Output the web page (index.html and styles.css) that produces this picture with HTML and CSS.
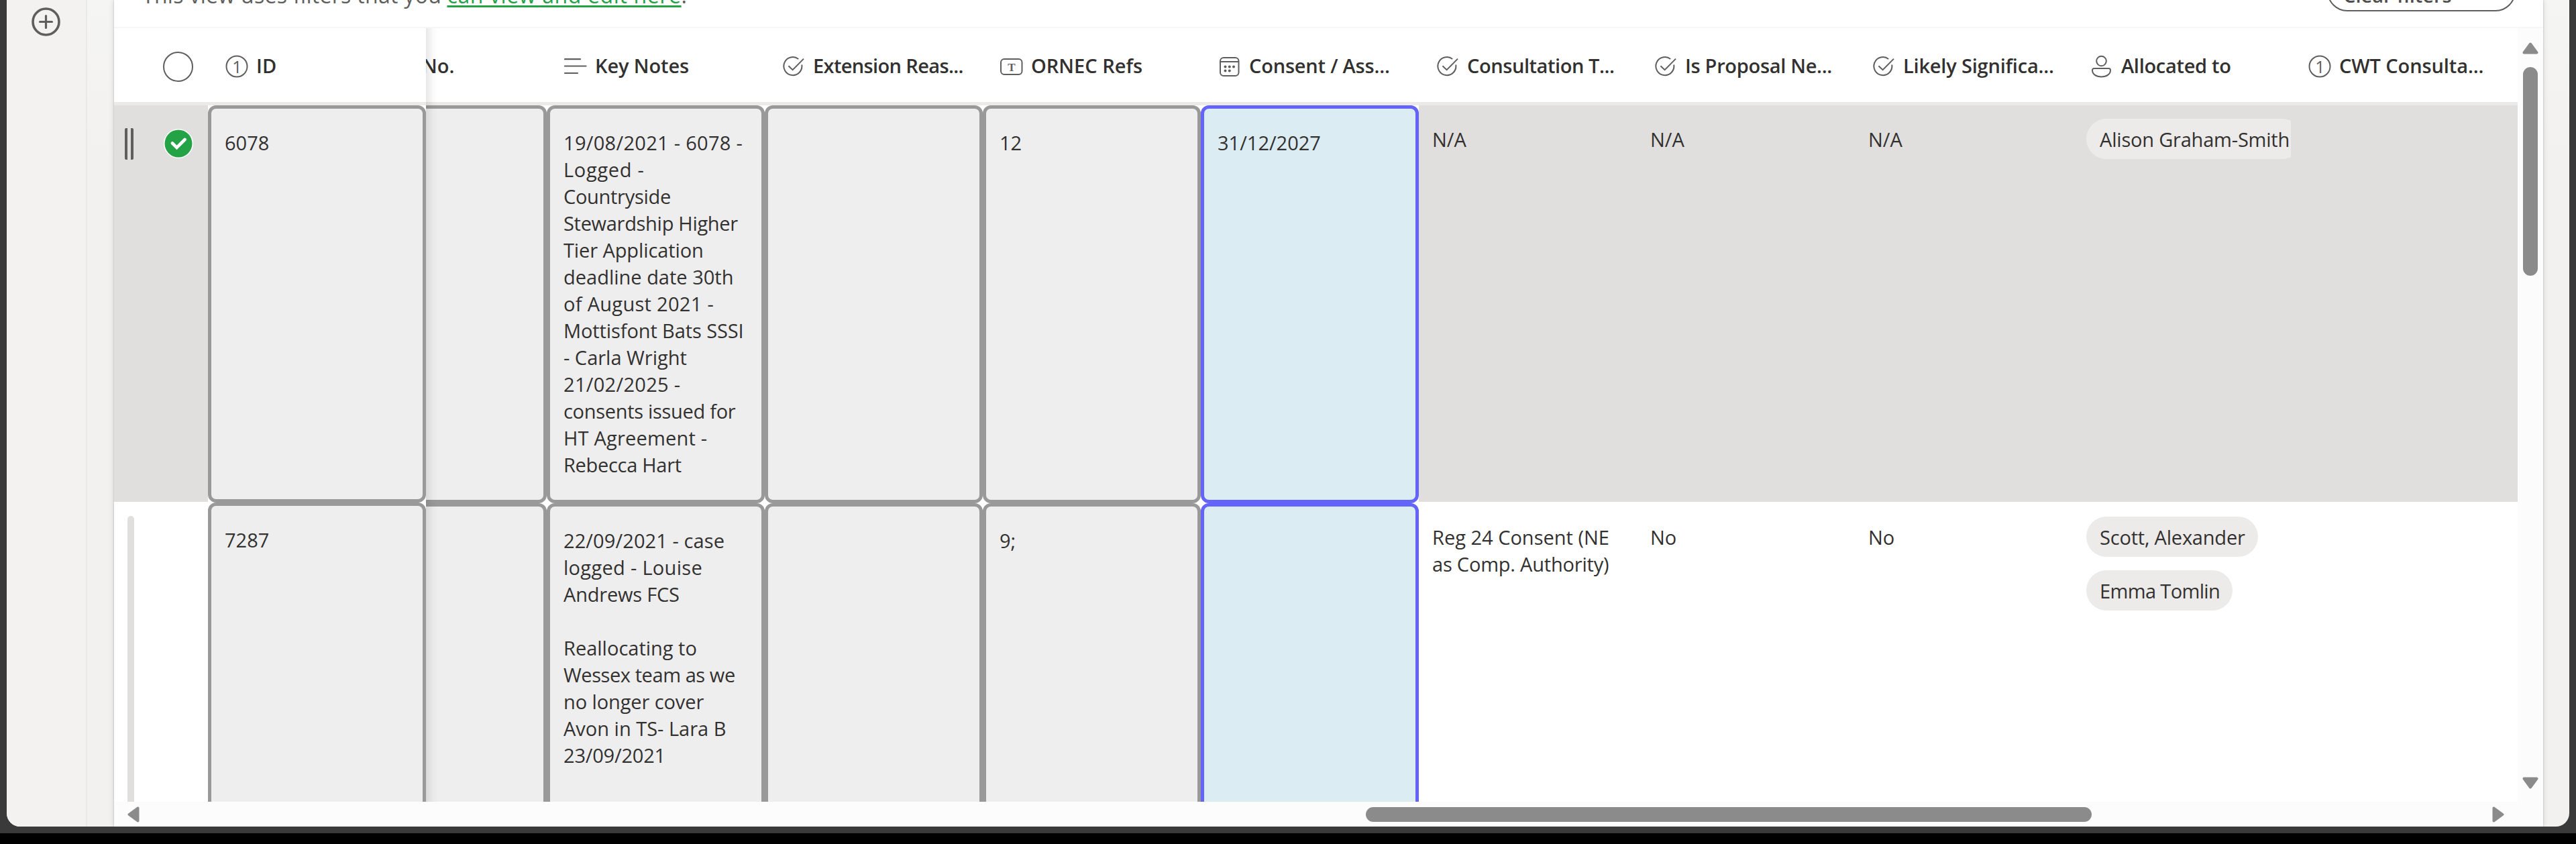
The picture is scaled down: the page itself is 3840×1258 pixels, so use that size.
FILE: index.html
```html
<!DOCTYPE html>
<html lang="en">
<head>
<meta charset="utf-8">
<title>Consents tracker</title>
<link rel="stylesheet" href="styles.css">
</head>
<body>
<svg class="defs" aria-hidden="true">
  <symbol id="i-num" viewBox="0 0 34 34"><circle cx="17" cy="17" r="15.5" fill="none" stroke="currentColor" stroke-width="2"/><text class="num-glyph" x="17.5" y="26.5" text-anchor="middle">1</text></symbol>
  <symbol id="i-lines" viewBox="0 0 34 34"><path d="M1 6.2h23M1 16.5h31.500M1 27h19" fill="none" stroke="currentColor" stroke-width="2.200" stroke-linecap="round"/></symbol>
  <symbol id="i-choice" viewBox="0 0 34 34"><path d="M24.200 6A13.500 13.500 0 1 0 29.200 14.500" fill="none" stroke="currentColor" stroke-width="2"/><path d="M9.400 16.200l6.200 6L32 5.600" fill="none" stroke="currentColor" stroke-width="2"/></symbol>
  <symbol id="i-text" viewBox="0 0 34 34"><rect x="1" y="6" width="31.500" height="23" rx="5" fill="none" stroke="currentColor" stroke-width="2"/><text class="t-glyph" x="16.800" y="23.500" text-anchor="middle">T</text></symbol>
  <symbol id="i-date" viewBox="0 0 34 34"><rect x="3" y="4" width="27.500" height="27" rx="5" fill="none" stroke="currentColor" stroke-width="2"/><path d="M3 10h27.500" stroke="currentColor" stroke-width="2"/><g fill="currentColor"><circle cx="10.500" cy="17.500" r="2"/><circle cx="16.800" cy="17.500" r="2"/><circle cx="23" cy="17.500" r="2"/><circle cx="10.500" cy="23.500" r="2"/><circle cx="16.800" cy="23.500" r="2"/></g></symbol>
  <symbol id="i-person" viewBox="0 0 34 34"><circle cx="16.500" cy="9" r="7.300" fill="none" stroke="currentColor" stroke-width="2"/><path d="M5.500 20h22a2.500 2.500 0 0 1 2.500 2.500C30 29 24 32.500 16.500 32.500S3 29 3 22.500A2.500 2.500 0 0 1 5.500 20z" fill="none" stroke="currentColor" stroke-width="2"/></symbol>
</svg>

<div class="window">
  <nav class="rail">
    <svg class="add" viewBox="0 0 43 43"><circle cx="21.500" cy="21.500" r="19.500" fill="none" stroke="#605e5c" stroke-width="3.600"/><path d="M21.500 12.500v18M12.500 21.500h18" stroke="#605e5c" stroke-width="3.200" stroke-linecap="round"/></svg>
  </nav>
  <main class="panel">
    <div class="notice">
      <p class="notice-text"><span class="p3">This view uses filters that you</span> <a class="p6">can view and edit here</a>.</p>
      <button class="clear">Clear filters</button>
    </div>
    <div class="grid">
      <div class="sheet">
        <div class="frozen">
          <div class="head">
            <div class="select"><span class="ring"></span></div>
            <div class="th"><svg class="icon"><use href="#i-num"/></svg><span class="p1">ID</span></div>
          </div>
          <div class="row first">
            <div class="select marked">
              <span class="handle"></span>
              <svg class="tick" viewBox="0 0 44 44"><circle cx="22" cy="22" r="22" fill="#fff"/><circle cx="22" cy="22" r="20.500" fill="#23a246"/><path d="M13 21.500l6.500 6.500L31.500 16" fill="none" stroke="#fff" stroke-width="4.600" stroke-linecap="round"/></svg>
            </div>
            <div class="cell locked">6078</div>
          </div>
          <div class="row second">
            <div class="select"><span class="bar"></span></div>
            <div class="cell locked">7287</div>
          </div>
        </div>
        <div class="scroll">
          <div class="head">
            <div class="th no">No.</div>
            <div class="th"><svg class="icon"><use href="#i-lines"/></svg><span class="n1">Key Notes</span></div>
            <div class="th"><svg class="icon"><use href="#i-choice"/></svg><span class="n6">Extension Reas...</span></div>
            <div class="th"><svg class="icon"><use href="#i-text"/></svg><span>ORNEC Refs</span></div>
            <div class="th"><svg class="icon"><use href="#i-date"/></svg><span class="n2">Consent / Ass...</span></div>
            <div class="th"><svg class="icon"><use href="#i-choice"/></svg><span class="n4">Consultation T...</span></div>
            <div class="th"><svg class="icon"><use href="#i-choice"/></svg><span class="n3">Is Proposal Ne...</span></div>
            <div class="th"><svg class="icon"><use href="#i-choice"/></svg><span class="n2">Likely Significa...</span></div>
            <div class="th"><svg class="icon"><use href="#i-person"/></svg><span class="n3">Allocated to</span></div>
            <div class="th last"><svg class="icon"><use href="#i-num"/></svg><span class="n1">CWT Consulta...</span></div>
          </div>
          <div class="row first">
            <div class="cell locked cut"></div>
            <div class="cell locked"><span class="p3">19/08/2021 - 6078 -</span><span class="p4">Logged -</span><span class="n3">Countryside</span><span class="n3">Stewardship Higher</span><span class="n1">Tier Application</span><span>deadline date 30th</span><span class="p3">of August 2021 -</span><span class="n1">Mottisfont Bats SSSI</span><span>- Carla Wright</span><span class="p3">21/02/2025 -</span><span class="n3">consents issued for</span><span class="p2">HT Agreement -</span><span class="n3">Rebecca Hart</span></div>
            <div class="cell locked"></div>
            <div class="cell locked">12</div>
            <div class="cell active">31/12/2027</div>
            <div class="cell plain shade">N/A</div>
            <div class="cell plain shade">N/A</div>
            <div class="cell plain shade">N/A</div>
            <div class="cell people shade"><span class="pill n2">Alison Graham-Smith</span></div>
            <div class="cell plain shade last"></div>
          </div>
          <div class="row second">
            <div class="cell locked cut"></div>
            <div class="cell locked"><span class="p1">22/09/2021 - case</span><span class="p3">logged - Louise</span><span class="n2">Andrews FCS</span><span>&nbsp;</span><span>Reallocating to</span><span class="n4">Wessex team as we</span><span class="n1">no longer cover</span><span>Avon in TS- Lara B</span><span class="n2">23/09/2021</span><span>&nbsp;</span><span>Ch</span></div>
            <div class="cell locked"></div>
            <div class="cell locked">9;</div>
            <div class="cell active"></div>
            <div class="cell plain"><span>Reg 24 Consent (NE</span><span class="n2">as Comp. Authority)</span></div>
            <div class="cell plain">No</div>
            <div class="cell plain">No</div>
            <div class="cell people"><span class="pill n2">Scott, Alexander</span><span class="pill n6">Emma Tomlin</span></div>
            <div class="cell plain last"></div>
          </div>
        </div>
      </div>
      <div class="vbar">
        <svg class="arrow-v" viewBox="0 0 24 18"><path d="M12 2.500L21.500 15.500H2.500z"/></svg>
        <span class="thumb-v"></span>
        <svg class="arrow-v down" viewBox="0 0 24 18"><path d="M12 15.500L21.500 2.500H2.500z"/></svg>
      </div>
    </div>
    <div class="hbar">
      <svg class="arrow-h" viewBox="0 0 18 24"><path d="M2.500 12L15.500 2.500V21.500z"/></svg>
      <span class="thumb-h"></span>
      <svg class="arrow-h right" viewBox="0 0 18 24"><path d="M15.500 12L2.500 2.500V21.500z"/></svg>
    </div>
  </main>
</div>
</body>
</html>
```
FILE: styles.css
```css
* { box-sizing: border-box; }

body {
  margin: 0;
  height: 1258px;
  overflow: hidden;
  padding: 0 10px 16px;
  background: linear-gradient(#3a3a3a 1242px, #000 1242px);
  font: 400 29px/40px "Open Sans", "Noto Sans", sans-serif;
  color: #323130;
}

.defs { display: none; }

.window {
  display: flex;
  height: 1232px;
  border-radius: 0 0 20px 20px;
  overflow: hidden;
  background: linear-gradient(#f5f5f4, #f2f1ef 240px);
}

.rail {
  width: 120px;
  flex: none;
  background: #f3f2f0;
  border-right: 2px solid #eae9e7;
  padding: 11px 0 0 37px;
}
.add { display: block; width: 43px; height: 43px; }

.panel {
  display: flex;
  flex-direction: column;
  width: 3621px;
  margin-left: 40px;
  background: #fff;
  box-shadow: 0 0 8px rgba(0, 0, 0, .14), 0 0 2px rgba(0, 0, 0, .2);
}

.notice {
  display: flex;
  justify-content: space-between;
  align-items: flex-end;
  height: 42px;
  flex: none;
  padding: 0 41px 0 42px;
  overflow: hidden;
  border-bottom: 2px solid #f6f6f6;
}
.notice-text {
  margin: 0 0 23px;
  font-size: 32px;
  line-height: 48px;
  white-space: nowrap;
  color: #605e5c;
}
.notice-text a {
  color: #23a246;
  text-decoration: underline;
  text-decoration-thickness: 3px;
  text-underline-offset: 3px;
  text-decoration-skip-ink: none;
}
.clear {
  flex: none;
  width: 281px;
  height: 60px;
  margin-bottom: 23px;
  padding: 12px 0 0 22px;
  text-align: left;
  border: 2.500px solid #605e5c;
  border-radius: 30px;
  background: #fff;
  color: #504e4c;
  font: 600 29px/40px "Open Sans", sans-serif;
}

.grid { display: flex; height: 1153px; flex: none; overflow: hidden; }
.sheet { display: flex; width: 3583px; flex: none; overflow: hidden; }

.frozen { width: 465px; flex: none; }
.scroll { position: relative; width: 3118px; flex: none; overflow: hidden; }
.scroll::before {
  content: "";
  position: absolute;
  z-index: 2;
  left: 0;
  top: 0;
  bottom: 0;
  width: 18px;
  background: linear-gradient(90deg, rgba(0, 0, 0, .09), rgba(0, 0, 0, .02) 60%, transparent);
}

.head {
  display: flex;
  height: 115px;
  border-bottom: 5px solid #ebeae9;
  font-weight: 600;
}
.th {
  display: flex;
  align-items: center;
  gap: 12px;
  width: 325px;
  flex: none;
  padding: 4px 0 0 26px;
  white-space: nowrap;
}
.th span { margin-top: -3px; }
.th.no { width: 180px; padding: 1px 0 0; text-indent: -6px; }
.th.last { width: 338px; }
.icon { width: 34px; height: 34px; flex: none; color: #605e5c; }
.num-glyph { font: 400 25px "Open Sans", sans-serif; fill: currentColor; }
.t-glyph { font: 700 17px "Liberation Serif", serif; fill: currentColor; }

.select { display: flex; width: 140px; flex: none; }
.ring {
  width: 45px;
  height: 45px;
  margin: 35px 0 0 73px;
  border: 2px solid #605e5c;
  border-radius: 50%;
}
.marked { background: #e0dfdd; }
.handle {
  width: 13px;
  height: 47px;
  margin: 34px 0 0 16px;
  border: solid #605e5c;
  border-width: 0 4.500px;
  border-radius: 2px;
}
.tick { width: 44px; height: 44px; margin: 35px 0 0 45px; }
.bar { width: 10px; margin: 21px 0 0 20px; border-radius: 5px 5px 0 0; background: #e0dfdd; }

.row { display: flex; }
.first { height: 591px; }
.second { height: 447px; }

.cell { width: 325px; flex: none; white-space: pre; }
.cell > span:not(.pill) { display: block; }
.locked, .active {
  height: 593px;
  padding: 31px 0 0 20px;
  border: 5px solid #999;
  border-radius: 12px;
  background: #eee;
}
.active { border-color: #6464fa; background: #dcecf3; }
.second .locked, .second .active { margin-top: 2px; height: 700px; }
.frozen .first .locked { height: 592px; }
.frozen .second .locked { margin-top: 1px; }
.cut { width: 180px; border-left: 0; border-top-left-radius: 0; border-bottom-left-radius: 0; }

.plain { padding: 31px 0 0 20px; }
.second .plain { padding-top: 33px; }
.cell.last { width: 338px; }
.shade { background: #e0dfdd; }

.people {
  display: flex;
  flex-direction: column;
  align-items: flex-start;
  gap: 20px;
  padding: 20px 0 0 20px;
  overflow: hidden;
}
.second .people { padding-top: 22px; }
.pill {
  height: 60px;
  padding: 11px 19px 0 20px;
  border-radius: 30px;
  background: #edebe9;
}
.first .pill { min-width: 317px; }

.vbar {
  display: flex;
  flex-direction: column;
  align-items: center;
  width: 38px;
  padding: 21px 0 19px;
  background: #fcfcfc;
}
.arrow-v { width: 24px; height: 18px; flex: none; }
.arrow-h { width: 18px; height: 24px; flex: none; }
.arrow-v, .arrow-h { fill: #8b8b8b; stroke: #8b8b8b; stroke-width: 4; stroke-linejoin: round; }
.thumb-v { width: 22px; height: 311px; margin-top: 19px; border-radius: 11px; background: #8b8b8b; }
.down { margin-top: auto; }

.hbar {
  display: flex;
  align-items: center;
  height: 37px;
  flex: none;
  padding: 1px 58px 0 20px;
  background: #fcfcfc;
}
.thumb-h { width: 1082px; height: 22px; margin-left: 1828px; border-radius: 11px; background: #8b8b8b; }
.right { margin-left: auto; }

/* Letter-spacing steps, in tenths of a pixel */
.n1 { letter-spacing: -.1px; }
.n2 { letter-spacing: -.2px; }
.n3 { letter-spacing: -.3px; }
.n4 { letter-spacing: -.43px; }
.n6 { letter-spacing: -.63px; }
.p1 { letter-spacing: .1px; }
.p2 { letter-spacing: .2px; }
.p3 { letter-spacing: .3px; }
.p4 { letter-spacing: .7px; }
.p6 { letter-spacing: .62px; }
```
